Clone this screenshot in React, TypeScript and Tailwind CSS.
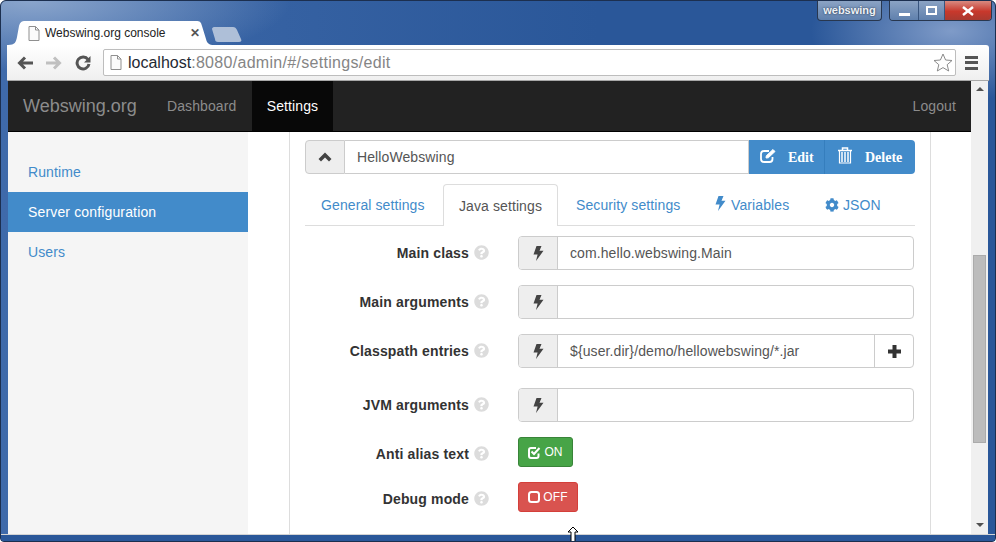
import React from 'react';
import { FaCog, FaQuestionCircle } from 'react-icons/fa';

const Hint = () => <FaQuestionCircle className="text-[15px] text-[#dcdcdc] shrink-0 mb-[2px]" />;

const Bolt = ({ className }: { className?: string }) => (
  <svg className={`shrink-0 ${className ?? ''}`} width="11" height="15" viewBox="0 0 11 15" fill="currentColor">
    <path d="M3.5 0 H8.5 L6.5 4.8 H10.5 L3 15 L4.6 8.4 H.5 Z" />
  </svg>
);

const Addon = () => (
  <span className="w-[39px] h-full shrink-0 flex items-center justify-center bg-[#eeeeee] border-r border-[#cccccc] text-[#444444]">
    <Bolt />
  </span>
);

const Field = ({ label, value, plus, className }: { label: string; value?: string; plus?: boolean; className: string }) => (
  <div className={`flex items-center ${className}`}>
    <div className="w-[184px] flex items-center justify-end gap-[5px] font-bold text-[#333333] tracking-[0.15px]">
      <span>{label}</span>
      <Hint />
    </div>
    <div className="ml-[29px] w-[396px] h-[34px] flex border border-[#cccccc] rounded-[4px] overflow-hidden bg-white">
      <Addon />
      <span className="flex-1 px-3 leading-[32px] text-[#555555]">{value}</span>
      {plus && (
        <span className="w-[39px] flex items-center justify-center border-l border-[#cccccc] text-[#333333]">
          <svg width="13" height="13" viewBox="0 0 13 13" fill="currentColor">
            <path d="M4.5 0 H8.5 V4.5 H13 V8.5 H8.5 V13 H4.5 V8.5 H0 V4.5 H4.5 Z" />
          </svg>
        </span>
      )}
    </div>
  </div>
);

const Toggle = ({ label, on, className }: { label: string; on?: boolean; className: string }) => (
  <div className={`flex items-center ${className}`}>
    <div className="w-[184px] mt-[5px] flex items-center justify-end gap-[5px] font-bold text-[#333333] tracking-[0.15px]">
      <span>{label}</span>
      <Hint />
    </div>
    {on ? (
      <button className="ml-[29px] w-[55px] h-[30px] flex items-center justify-center gap-[3px] rounded-[3px] border border-[#398439] bg-[#47a447] text-white text-[12px]">
        <svg width="13" height="13" viewBox="0 0 13 13" fill="none" stroke="currentColor" strokeWidth="2">
          <path d="M10.5 7.5 V10 Q10.5 12 8.5 12 H3 Q1 12 1 10 V4 Q1 2 3 2 H8" />
          <path d="M3.5 5.5 L6 8 L11.5 2" />
        </svg>
        ON
      </button>
    ) : (
      <button className="ml-[29px] w-[60px] h-[30px] flex items-center justify-center gap-[3px] rounded-[3px] border border-[#d43f3a] bg-[#d9534f] text-white text-[12px]">
        <svg width="12" height="12" viewBox="0 0 12 12" fill="none" stroke="currentColor" strokeWidth="2">
          <rect x="1" y="1" width="10" height="10" rx="2.5" />
        </svg>
        OFF
      </button>
    )}
  </div>
);

export default function App() {
  return (
    <div className="relative w-[996px] h-[542px] overflow-hidden flex flex-col border border-[#1c2f4f] rounded-t-[6px] rounded-b-[4px] font-['Liberation_Sans',Arial,sans-serif] text-[14px] bg-[#2a5799] bg-[radial-gradient(ellipse_260px_70px_at_30px_0px,#8aa5cc,transparent),radial-gradient(ellipse_140px_70px_at_950px_30px,#7f9bc8,transparent),linear-gradient(90deg,#3f6aaa,#2a5799_60%,#2a5799)]">
      {/* window title bar */}
      <div className="h-[20px] flex justify-end pr-[3px] shrink-0">
        <div className="w-[65px] h-[20px] mr-[7px] flex items-center justify-center rounded-b-[4px] border border-t-0 border-[#28374f] bg-[linear-gradient(#8ba3c4,#5f80ad)] text-[11px] font-bold text-[#eef2f7] [text-shadow:0_0_2px_#1d2a3d]">
          webswing
        </div>
        <div className="w-[103px] h-[20px] flex rounded-b-[4px] border border-t-0 border-[#28374f] overflow-hidden">
          <span className="w-[29px] flex items-end justify-center pb-[4px] bg-[linear-gradient(#8ba3c4,#5f80ad)] border-r border-[#38557f]">
            <span className="w-[11px] h-[3px] bg-white" />
          </span>
          <span className="w-[26px] flex items-center justify-center bg-[linear-gradient(#8ba3c4,#5f80ad)] border-r border-[#38557f]">
            <span className="w-[11px] h-[9px] border-2 border-white" />
          </span>
          <span className="flex-1 flex items-center justify-center bg-[linear-gradient(#d98a80,#c8382c_55%,#a93a30)]">
            <svg width="14" height="10" viewBox="0 0 14 10" stroke="#ffffff" strokeWidth="2.5">
              <path d="M2 1 L12 9 M12 1 L2 9" />
            </svg>
          </span>
        </div>
      </div>

      {/* tab strip */}
      <div className="h-[24px] pl-[7px] flex items-end shrink-0">
        <div className="relative w-[206px] h-[24px] flex items-center pl-[20px] text-[12px] text-[#222222]">
          <svg className="absolute inset-0" width="206" height="24" viewBox="0 0 206 24">
            <path d="M0 24 C7 24 8 21 9 16 L11 5 C12 1 14 0 17 0 L188 0 C192 0 193 1 194 5 L198 18 C199 22 201 24 206 24 Z" fill="#ffffff" />
          </svg>
          <svg className="relative mr-[5px]" width="12" height="15" viewBox="0 0 12 15" fill="#fbfbfb" stroke="#8f8f8f">
            <path d="M1 .5 H7.5 L11 4 V14.5 H1 Z M7.5 .5 V4 H11" />
          </svg>
          <span className="relative">Webswing.org console</span>
          <span className="relative ml-[24px] text-[#555555] font-bold text-[12px]">✕</span>
        </div>
        <svg className="mb-[3px] ml-[-3px]" width="32" height="15" viewBox="0 0 32 15">
          <path d="M1 2 C1 1 2 0 3 0 L22 0 C24 0 25 1 26 3 L30 12 C31 14 30 15 28 15 L7 15 C5 15 4 14 4 12 Z" fill="#aebfd8" />
        </svg>
      </div>

      {/* toolbar */}
      <div className="mx-[6px] h-[36px] flex items-center shrink-0 rounded-tr-[3px] bg-[linear-gradient(#ffffff,#efefef)] border-b border-[#a8a8a8]">
        <div className="w-[96px] pl-[10px] flex items-center shrink-0">
          <svg width="16" height="14" viewBox="0 0 16 14" fill="none" stroke="#555555" strokeWidth="3">
            <path d="M16 7 H3 M8 1.5 L2.5 7 L8 12.5" />
          </svg>
          <svg className="ml-[13px]" width="16" height="14" viewBox="0 0 16 14" fill="none" stroke="#c0c0c0" strokeWidth="3">
            <path d="M0 7 H13 M8 1.5 L13.5 7 L8 12.5" />
          </svg>
          <svg className="ml-[13px]" width="16" height="16" viewBox="0 0 16 16" fill="none" stroke="#555555" strokeWidth="3">
            <path d="M13 4.5 A6 6 0 1 0 14 9" />
            <path d="M15.5 1 V7.5 H9 Z" fill="#555555" stroke="none" />
          </svg>
        </div>
        <div className="w-[853px] h-[27px] flex items-center bg-white border border-[#bdbdbd] rounded-[2px] pl-[6px] text-[16px] shrink-0">
          <svg width="12" height="15" viewBox="0 0 12 15" fill="#fbfbfb" stroke="#8f8f8f">
            <path d="M1 .5 H7.5 L11 4 V14.5 H1 Z M7.5 .5 V4 H11" />
          </svg>
          <span className="ml-[6px] text-[#1f2a33]">localhost</span>
          <span className="text-[#858585] tracking-[0.3px]">:8080/admin/#/settings/edit</span>
          <svg className="ml-auto mr-[2px]" width="20" height="19" viewBox="0 0 20 19" fill="#fdfdfd" stroke="#8a8a8a">
            <path d="M10 1 L12.6 7 L19 7.5 L14.2 11.7 L15.7 18 L10 14.6 L4.3 18 L5.8 11.7 L1 7.5 L7.4 7 Z" />
          </svg>
        </div>
        <div className="ml-[9px] w-[13px] flex flex-col gap-[2.5px]">
          <span className="h-[3px] bg-[#555555]" />
          <span className="h-[3px] bg-[#555555]" />
          <span className="h-[3px] bg-[#555555]" />
        </div>
      </div>

      {/* page plus scrollbar */}
      <div className="mx-[7px] flex-1 flex min-h-0 bg-white">
        <div className="w-[963px] flex flex-col min-h-0 tracking-[0.1px]">
          <nav className="h-[51px] shrink-0 flex items-stretch bg-[#222222] border-b border-black">
            <span className="pl-[15px] w-[144px] text-[18px] tracking-normal leading-[50px] text-[#8c8c8c]">Webswing.org</span>
            <span className="w-[100px] pl-[15px] leading-[50px] text-[#8c8c8c]">Dashboard</span>
            <span className="w-[81px] text-center leading-[50px] bg-[#080808] text-white">Settings</span>
            <span className="ml-auto pr-[15px] leading-[50px] text-[#8c8c8c]">Logout</span>
          </nav>
          <div className="flex-1 flex min-h-0">
            <aside className="w-[240px] shrink-0 pt-[20px] bg-[#f5f5f5] text-[#428bca]">
              <div className="h-[40px] pl-[20px] leading-[40px]">Runtime</div>
              <div className="h-[40px] pl-[20px] leading-[40px] bg-[#428bca] text-white tracking-[0.15px]">Server configuration</div>
              <div className="h-[40px] pl-[20px] leading-[40px]">Users</div>
            </aside>
            <div className="w-[41px] shrink-0" />
            <main className="w-[642px] shrink-0 border-x border-[#dddddd] pt-[8px] pl-[15px]">
              <div className="w-[610px] h-[34px] flex">
                <span className="w-[40px] flex items-center justify-center bg-[#eeeeee] border border-[#cccccc] rounded-l-[4px] text-[#444444]">
                  <svg width="14" height="10" viewBox="0 0 14 10" fill="currentColor">
                    <path d="M7 .5 L13.5 7 L11 9.5 L7 5.5 L3 9.5 L.5 7 Z" />
                  </svg>
                </span>
                <span className="w-[404px] px-3 leading-[32px] border-y border-r border-[#cccccc] text-[#555555]">HelloWebswing</span>
                <span className="flex-1 flex rounded-r-[4px] bg-[#428bca] text-white font-['Liberation_Serif',serif] tracking-normal">
                  <span className="w-[76px] flex items-center pl-[11px] border-r border-[#357ebd]">
                    <svg className="mb-[3px]" width="17" height="15" viewBox="0 0 17 15" fill="none" stroke="currentColor" strokeWidth="1.8">
                      <path d="M12.5 9 V11 Q12.5 14 9.5 14 H4 Q1 14 1 11 V6 Q1 3 4 3 H9" />
                      <path d="M6 10 L6.3 7.8 L13 1.5 L15 3.5 L8.3 9.8 Z" strokeWidth="1" fill="currentColor" />
                    </svg>
                    <span className="ml-[11px] font-semibold">Edit</span>
                  </span>
                  <span className="flex-1 flex items-center pl-[13px]">
                    <svg className="mb-[3px]" width="14" height="17" viewBox="0 0 14 17" fill="none" stroke="currentColor">
                      <path d="M0 3.5 H14 M4.5 3 V1 H9.5 V3" strokeWidth="1.5" />
                      <path d="M1.5 4 V16 H12.5 V4" strokeWidth="1.2" />
                      <path d="M4 5 V15 M7 5 V15 M10 5 V15" strokeWidth="1.5" />
                    </svg>
                    <span className="ml-[13px] font-semibold">Delete</span>
                  </span>
                </span>
              </div>
              <div className="mt-[10px] w-[610px] h-[42px] flex items-stretch border-b border-[#dddddd] text-[#428bca]">
                <span className="ml-[1px] mr-[2px] w-[135px] pl-[15px] leading-[42px]">General settings</span>
                <span className="w-[115px] h-[42px] text-center leading-[42px] bg-white border border-b-0 border-[#dddddd] rounded-t-[4px] text-[#555555]">Java settings</span>
                <span className="ml-[18px] w-[139px] leading-[42px]">Security settings</span>
                <span className="w-[110px] pt-[1px] flex items-center gap-[5px]">
                  <Bolt className="mb-[3px]" />
                  Variables
                </span>
                <span className="pt-[1px] flex items-center gap-[4px]">
                  <FaCog className="text-[14px] mb-[1px]" />
                  JSON
                </span>
              </div>
              <Field label="Main class" value="com.hello.webswing.Main" className="mt-[10px]" />
              <Field label="Main arguments" className="mt-[15px]" />
              <Field label="Classpath entries" value="${user.dir}/demo/hellowebswing/*.jar" plus className="mt-[15px]" />
              <Field label="JVM arguments" className="mt-[20px]" />
              <Toggle label="Anti alias text" on className="mt-[15px]" />
              <Toggle label="Debug mode" className="mt-[15px]" />
            </main>
          </div>
        </div>
        <div className="w-[17px] shrink-0 flex flex-col items-center bg-[#f0f0f0]">
          <span className="mt-[6px] w-0 h-0 border-x-[4px] border-x-transparent border-b-[4px] border-b-[#505050]" />
          <span className="mt-[164px] w-[13px] h-[188px] bg-[#bcbcbc] border border-[#ababab]" />
          <span className="mt-[80px] w-0 h-0 border-x-[4px] border-x-transparent border-t-[4px] border-t-[#505050]" />
        </div>
      </div>

      {/* window bottom frame */}
      <div className="h-[7px] shrink-0 border-t border-[#d4d4d4] bg-[#2a5799]" />

      {/* mouse pointer */}
      <svg className="absolute left-[566px] top-[525px]" width="12" height="16" viewBox="0 0 12 16" fill="#ffffff" stroke="#000000">
        <path d="M6 1 L11 6 H8 V16 H4 V6 H1 Z" />
      </svg>
    </div>
  );
}
